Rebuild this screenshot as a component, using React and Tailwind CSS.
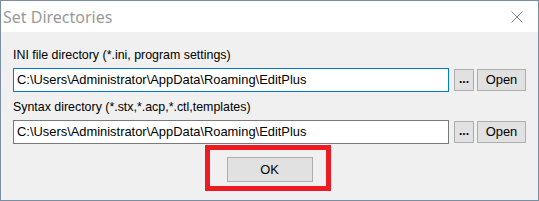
import React from 'react';

const uiFont = { fontFamily: '"Liberation Sans", Arial, sans-serif' };

function DirRow({ value, focused }) {
  return (
    <div className="flex items-center mt-[5px]">
      <div
        className={
          'w-[436px] h-[24px] bg-white border flex items-center pl-[3px] text-[12.9px] text-black ' +
          (focused ? 'border-[#0078d7]' : 'border-[#7a7a7a]')
        }
      >
        {value}
      </div>
      <button className="ml-[5px] w-[20px] h-[22px] bg-[#e1e1e1] border border-[#adadad] text-[12px] leading-none flex items-end justify-center pb-[5px] font-bold">
        ...
      </button>
      <button className="ml-[3px] w-[49px] h-[22px] bg-[#e1e1e1] border border-[#adadad] text-[12.9px] flex items-center justify-center">
        Open
      </button>
    </div>
  );
}

export default function App() {
  const path = 'C:\\Users\\Administrator\\AppData\\Roaming\\EditPlus';
  return (
    <div className="w-[539px] h-[201px] border border-[#7a8ea3] bg-[#f0f0f0] flex flex-col" style={uiFont}>
      {/* title bar */}
      <div className="h-[31px] bg-white flex items-center justify-between pl-[2px] pr-[15px] shrink-0">
        <span className="text-[16px] text-[#999999]" style={{ fontFamily: '"Noto Sans", "Open Sans", sans-serif' }}>
          Set Directories
        </span>
        <svg width="12" height="12" viewBox="0 0 12 12" className="mt-[1px]">
          <line x1="0.5" y1="0.5" x2="11.5" y2="11.5" stroke="#8a8a8a" strokeWidth="1" />
          <line x1="11.5" y1="0.5" x2="0.5" y2="11.5" stroke="#8a8a8a" strokeWidth="1" />
        </svg>
      </div>

      <div className="px-[12px] flex flex-col">
        <div className="mt-[16px] text-[12.4px] leading-[15px] text-black">INI file directory (*.ini, program settings)</div>
        <DirRow value={path} focused />
        <div className="mt-[8px] text-[12.4px] leading-[15px] text-black">Syntax directory (*.stx,*.acp,*.ctl,templates)</div>
        <DirRow value={path} />

        <div className="flex justify-center mt-[13px]">
          <div className="relative">
            <button className="w-[86px] h-[25px] bg-[#e1e1e1] border border-[#adadad] text-[12.9px] text-black flex items-center justify-center">
              OK
            </button>
            <div className="absolute left-[-22px] top-[-12px] w-[126px] h-[46px] border-[5px] border-[#ed1c24]" />
          </div>
        </div>
      </div>
    </div>
  );
}
